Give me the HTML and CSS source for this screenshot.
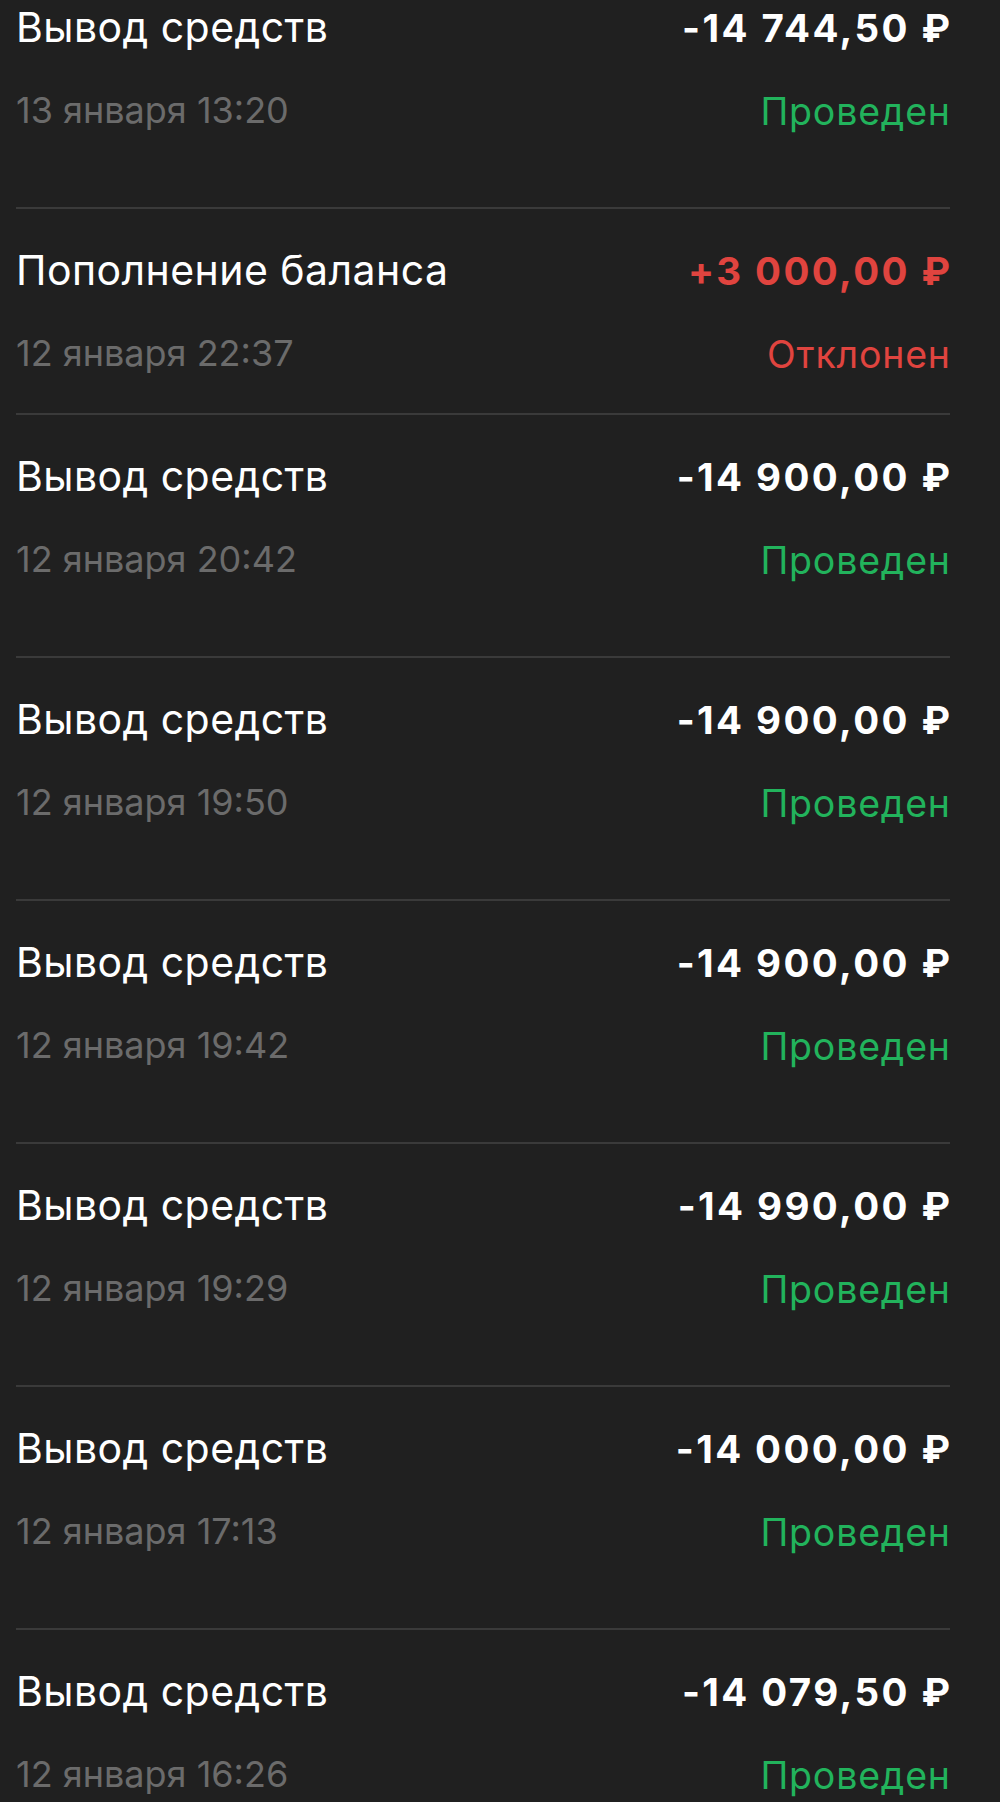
FILE: index.html
```html
<!DOCTYPE html>
<html lang="ru">
<head>
<meta charset="utf-8">
<title>Операции</title>
<link rel="stylesheet" href="styles.css">
</head>
<body>
<main class="feed">
  <section class="tx">
    <div class="tx-head"><span class="tx-title">Вывод средств</span><span class="tx-amount">-14 744,50 ₽</span></div>
    <div class="tx-meta"><span class="tx-date">13 января 13:20</span><span class="tx-status tx-status--ok">Проведен</span></div>
  </section>
  <section class="tx tx--compact">
    <div class="tx-head"><span class="tx-title">Пополнение баланса</span><span class="tx-amount tx-amount--fail">+3 000,00 ₽</span></div>
    <div class="tx-meta"><span class="tx-date">12 января 22:37</span><span class="tx-status tx-status--fail">Отклонен</span></div>
  </section>
  <section class="tx">
    <div class="tx-head"><span class="tx-title">Вывод средств</span><span class="tx-amount">-14 900,00 ₽</span></div>
    <div class="tx-meta"><span class="tx-date">12 января 20:42</span><span class="tx-status tx-status--ok">Проведен</span></div>
  </section>
  <section class="tx">
    <div class="tx-head"><span class="tx-title">Вывод средств</span><span class="tx-amount">-14 900,00 ₽</span></div>
    <div class="tx-meta"><span class="tx-date">12 января 19:50</span><span class="tx-status tx-status--ok">Проведен</span></div>
  </section>
  <section class="tx">
    <div class="tx-head"><span class="tx-title">Вывод средств</span><span class="tx-amount">-14 900,00 ₽</span></div>
    <div class="tx-meta"><span class="tx-date">12 января 19:42</span><span class="tx-status tx-status--ok">Проведен</span></div>
  </section>
  <section class="tx">
    <div class="tx-head"><span class="tx-title">Вывод средств</span><span class="tx-amount">-14 990,00 ₽</span></div>
    <div class="tx-meta"><span class="tx-date">12 января 19:29</span><span class="tx-status tx-status--ok">Проведен</span></div>
  </section>
  <section class="tx">
    <div class="tx-head"><span class="tx-title">Вывод средств</span><span class="tx-amount">-14 000,00 ₽</span></div>
    <div class="tx-meta"><span class="tx-date">12 января 17:13</span><span class="tx-status tx-status--ok">Проведен</span></div>
  </section>
  <section class="tx">
    <div class="tx-head"><span class="tx-title">Вывод средств</span><span class="tx-amount">-14 079,50 ₽</span></div>
    <div class="tx-meta"><span class="tx-date">12 января 16:26</span><span class="tx-status tx-status--ok">Проведен</span></div>
  </section>
</main>
</body>
</html>
```
FILE: styles.css
```css
html, body {
  margin: 0;
  padding: 0;
  background: #202020;
  overflow: hidden;
}

body {
  font-family: Inter, "Noto Sans", "DejaVu Sans", sans-serif;
  color: #ffffff;
}

.feed {
  display: flex;
  flex-direction: column;
  margin-top: -34px;
}

.tx {
  margin: 0 50px 0 16px;
  padding: 36px 0 75px;
  border-bottom: 2px solid #3a3a3a;
  display: flex;
  flex-direction: column;
  gap: 36px;
}

.tx--compact {
  padding-bottom: 38px;
}

.tx-head {
  display: flex;
  justify-content: space-between;
  align-items: baseline;
  height: 50px;
}

.tx-title {
  font-size: 41px;
  line-height: 50px;
  font-weight: 400;
  letter-spacing: 0.45px;
}

.tx-amount {
  font-size: 38.5px;
  line-height: 50px;
  font-weight: 700;
  letter-spacing: 2.4px;
  margin-right: -2.4px;
}

.tx-amount--fail {
  color: #e0443f;
}

.tx-meta {
  display: flex;
  justify-content: space-between;
  align-items: flex-end;
  height: 44px;
}

.tx-date {
  font-size: 36px;
  line-height: 44px;
  color: #6b6b6b;
}

.tx-status {
  font-size: 37.5px;
  line-height: 40px;
  letter-spacing: 0.8px;
  margin-right: -0.8px;
}

.tx-status--ok {
  color: #22b35c;
}

.tx-status--fail {
  color: #e0443f;
}
```
